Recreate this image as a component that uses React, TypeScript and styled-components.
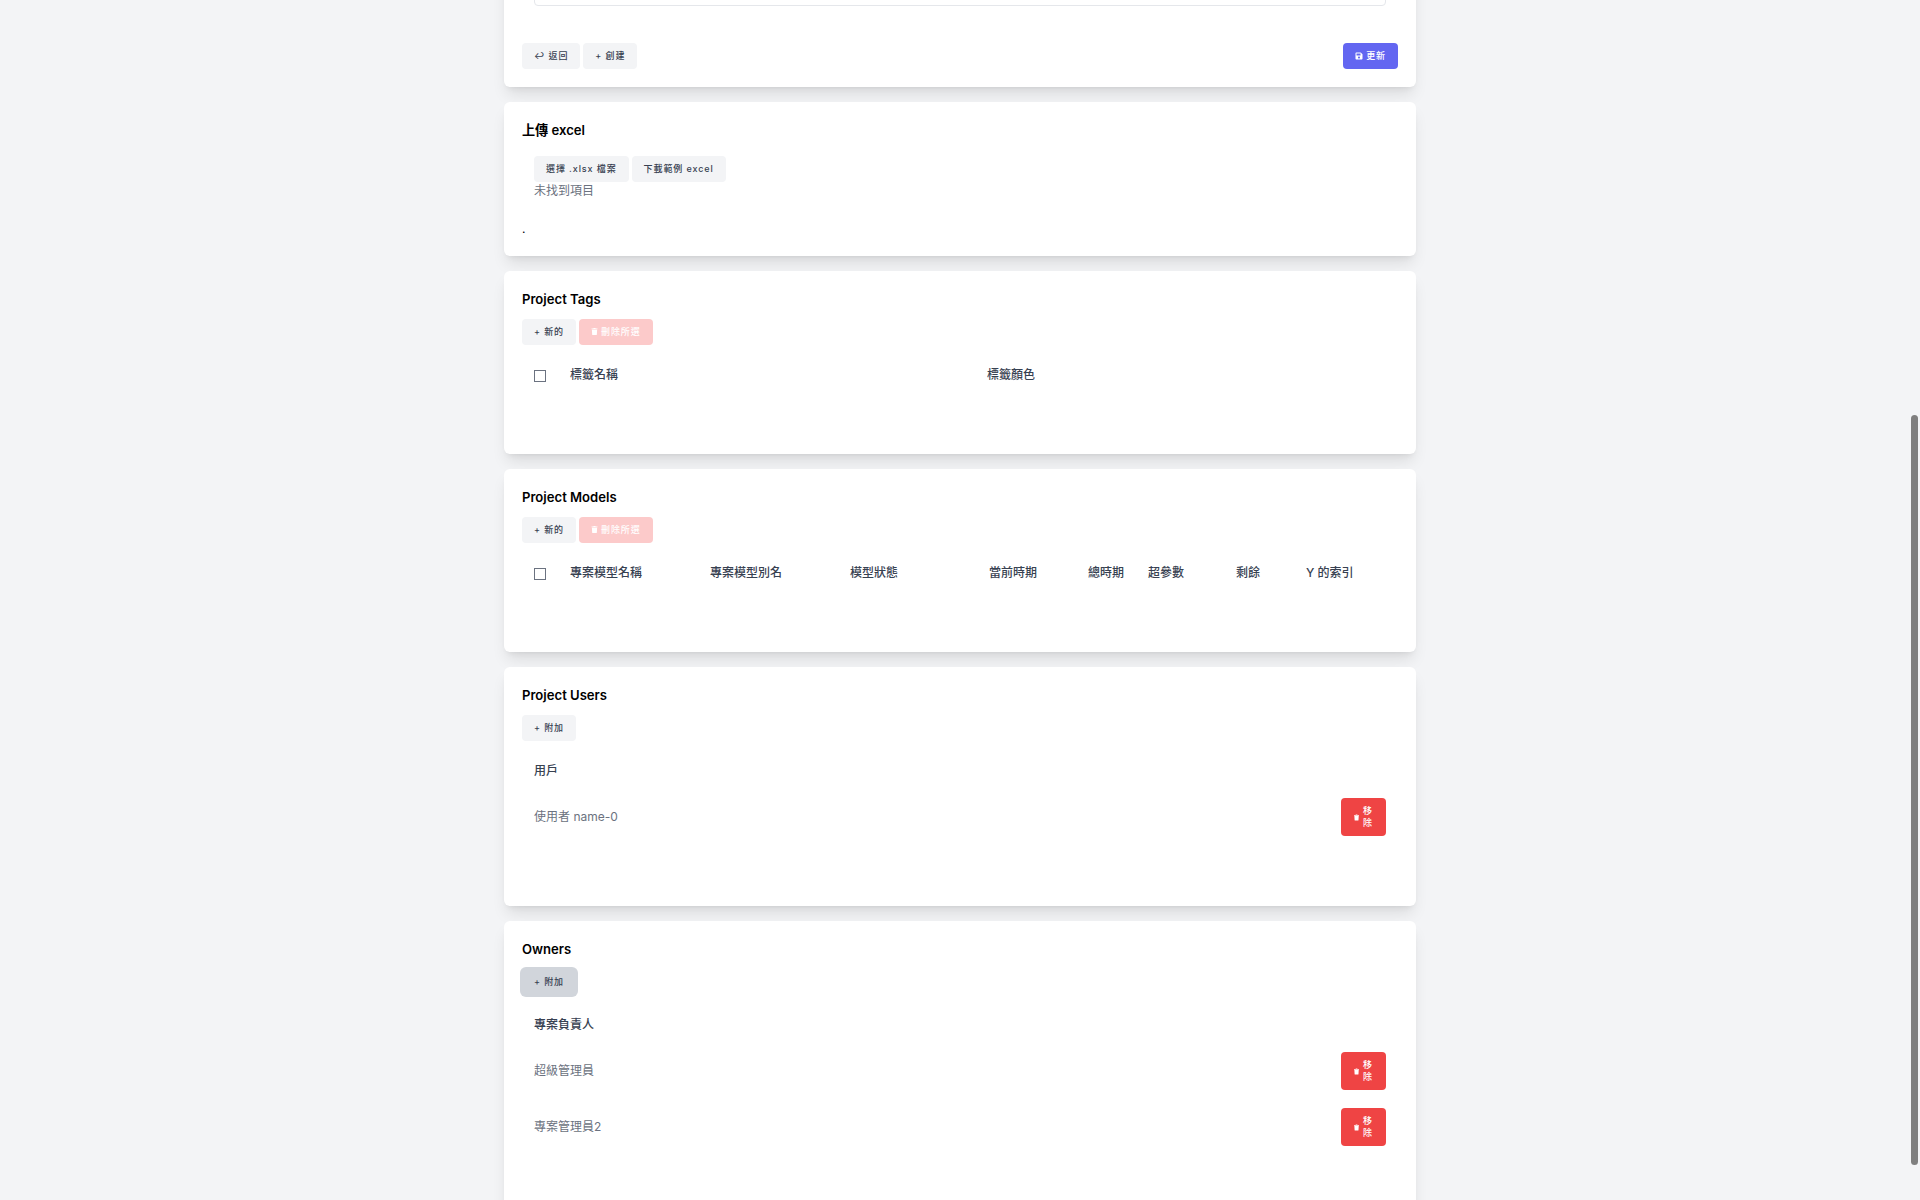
import { useLayoutEffect, useRef, useState } from "react"
import styled, { createGlobalStyle } from "styled-components"
import { FaSave, FaTrash } from "react-icons/fa"

const GlobalStyle = createGlobalStyle`
  html, body {
    margin: 0;
    height: 100%;
    overflow: hidden;
    background: #f3f4f6;
  }
  * {
    box-sizing: border-box;
  }
`

const Frame = styled.div`
  position: relative;
  height: 100vh;
`

const Scroller = styled.div`
  height: 100%;
  overflow-y: scroll;
  scrollbar-width: none;
  background: #f3f4f6;
  font-family: Inter, "Noto Sans CJK TC", sans-serif;
`

// headless chrome hides real scrollbars, so the thumb is drawn over the page
const ScrollThumb = styled.div`
  position: absolute;
  right: 2px;
  width: 7px;
  border-radius: 4px;
  background: #7f7f7f;
`

const Page = styled.main`
  width: 912px;
  margin: 0 auto;
  padding: 40px 0;
  display: flex;
  flex-direction: column;
  gap: 15px;
`

const Card = styled.section`
  background: #fff;
  border-radius: 6px;
  padding: 18px;
  box-shadow: 0 10px 15px -3px rgba(0, 0, 0, 0.1), 0 4px 6px -4px rgba(0, 0, 0, 0.1);
`

const Title = styled.h2`
  margin: 0 0 10px;
  font-size: 13.1px;
  line-height: 20px;
  font-weight: 600;
  color: #000;
`

const Indented = styled.div`
  padding: 0 12px;
`

const Description = styled.textarea`
  display: block;
  width: 100%;
  height: 612px;
  border: 1px solid #e5e7eb;
  border-radius: 4px;
  resize: none;
  background: #fff;
`

const Footer = styled.div`
  display: flex;
  justify-content: space-between;
  margin-top: 37px;
`

const Buttons = styled.div`
  display: flex;
  gap: 3px;
`

const Button = styled.button<{ $variant?: "plain" | "primary" | "faded" | "danger"; $focused?: boolean }>`
  height: 26px;
  padding: 0 12px 1px;
  display: inline-flex;
  align-items: center;
  gap: 3px;
  border: 0;
  border-radius: 4px;
  font-family: inherit;
  font-size: 9px;
  font-weight: 500;
  letter-spacing: 0.9px;
  white-space: nowrap;
  color: ${(p) => (!p.$variant || p.$variant === "plain" ? "#374151" : "#fff")};
  background: ${(p) =>
    p.$focused
      ? "#d1d5db"
      : p.$variant === "primary"
        ? "#6366f1"
        : p.$variant === "faded"
          ? "#fccaca"
          : p.$variant === "danger"
            ? "#ef4444"
            : "#f3f4f6"};
  box-shadow: ${(p) => (p.$focused ? "0 0 0 2px #d1d5db" : "none")};
`

const RemoveButton = styled(Button).attrs({ $variant: "danger" as const })`
  height: 38px;
  width: 45px;
  padding: 0 13px;
  justify-content: center;
  gap: 4px;
`

const RemoveLabel = styled.span`
  width: 10px;
  white-space: normal;
  line-height: 12px;
`

const Note = styled.div`
  margin-top: 1px;
  font-size: 12px;
  line-height: 16px;
  color: #6b7280;
`

const UploadButtons = styled(Buttons)`
  margin-top: 16px;
`

const Dot = styled.p`
  margin: 22px 0 1px;
  font-size: 12px;
  line-height: 16px;
  color: #000;
`

const Table = styled.table`
  width: 100%;
  margin: 10px 0 43px;
  border-collapse: collapse;
  table-layout: fixed;
`

const Th = styled.th`
  height: 38px;
  padding: 2px 12px 0;
  text-align: left;
  font-size: 12px;
  line-height: 20px;
  font-weight: 500;
  color: #374151;
  white-space: nowrap;
`

const Td = styled.td`
  height: 56px;
  padding: 0 12px;
  font-size: 12px;
  line-height: 20px;
  color: #6b7280;
`

const Check = styled.span`
  display: block;
  width: 12px;
  height: 12px;
  margin-top: 1px;
  border: 1px solid #6b7280;
  background: #fff;
`

const RowAction = styled.div`
  display: flex;
  justify-content: flex-end;
`

function DataTable({ widths, headers }: { widths: number[]; headers: string[] }) {
  return (
    <Table>
      <colgroup>
        {widths.map((w, i) => (
          <col key={i} width={w} />
        ))}
      </colgroup>
      <thead>
        <tr>
          <Th>
            <Check />
          </Th>
          {headers.map((h) => (
            <Th key={h}>{h}</Th>
          ))}
        </tr>
      </thead>
    </Table>
  )
}

function PeopleTable({ heading, people }: { heading: string; people: string[] }) {
  return (
    <Table>
      <thead>
        <tr>
          <Th>{heading}</Th>
          <Th />
        </tr>
      </thead>
      <tbody>
        {people.map((name) => (
          <tr key={name}>
            <Td>{name}</Td>
            <Td>
              <RowAction>
                <RemoveButton>
                  <FaTrash size={7} />
                  <RemoveLabel>移除</RemoveLabel>
                </RemoveButton>
              </RowAction>
            </Td>
          </tr>
        ))}
      </tbody>
    </Table>
  )
}

function App() {
  const scroller = useRef<HTMLDivElement>(null)
  const [thumb, setThumb] = useState({ top: 0, height: 0 })

  useLayoutEffect(() => {
    const el = scroller.current
    if (!el) return
    el.scrollTop = 664
    setThumb({
      top: (el.scrollTop / el.scrollHeight) * el.clientHeight,
      height: (el.clientHeight / el.scrollHeight) * el.clientHeight,
    })
  }, [])

  return (
    <Frame>
      <GlobalStyle />
      <Scroller ref={scroller}>
        <Page>
          <Card>
            <Indented>
              <Description readOnly />
            </Indented>
            <Footer>
              <Buttons>
                <Button>↩ 返回</Button>
                <Button>+ 創建</Button>
              </Buttons>
              <Button $variant="primary">
                <FaSave size={8} />
                更新
              </Button>
            </Footer>
          </Card>

          <Card>
            <Title>上傳 excel</Title>
            <Indented>
              <UploadButtons>
                <Button>選擇 .xlsx 檔案</Button>
                <Button>下載範例 excel</Button>
              </UploadButtons>
              <Note>未找到項目</Note>
            </Indented>
            <Dot>.</Dot>
          </Card>

          <Card>
            <Title>Project Tags</Title>
            <Buttons>
              <Button>+ 新的</Button>
              <Button $variant="faded">
                <FaTrash size={7} />
                刪除所選
              </Button>
            </Buttons>
            <DataTable widths={[36, 417, 423]} headers={["標籤名稱", "標籤顏色"]} />
          </Card>

          <Card>
            <Title>Project Models</Title>
            <Buttons>
              <Button>+ 新的</Button>
              <Button $variant="faded">
                <FaTrash size={7} />
                刪除所選
              </Button>
            </Buttons>
            <DataTable
              widths={[36, 140, 140, 139, 99, 60, 88, 70, 104]}
              headers={["專案模型名稱", "專案模型別名", "模型狀態", "當前時期", "總時期", "超參數", "剩餘", "Y 的索引"]}
            />
          </Card>

          <Card>
            <Title>Project Users</Title>
            <Buttons>
              <Button>+ 附加</Button>
            </Buttons>
            <PeopleTable heading="用戶" people={["使用者 name-0"]} />
          </Card>

          <Card>
            <Title>Owners</Title>
            <Buttons>
              <Button $focused>+ 附加</Button>
            </Buttons>
            <PeopleTable heading="專案負責人" people={["超級管理員", "專案管理員2"]} />
          </Card>
        </Page>
      </Scroller>
      <ScrollThumb style={{ top: thumb.top, height: thumb.height }} />
    </Frame>
  )
}

export default App
